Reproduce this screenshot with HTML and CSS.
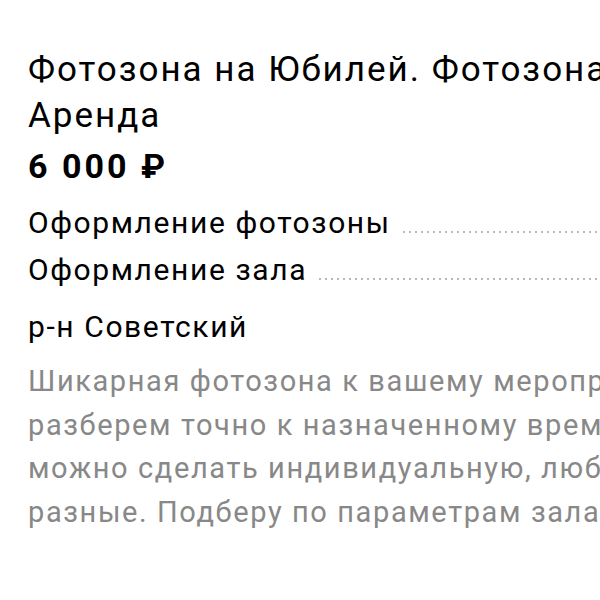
FILE: index.html
```html
<!DOCTYPE html>
<html lang="ru">
  <head>
    <meta charset="UTF-8" />
    <meta name="viewport" content="width=device-width, initial-scale=1.0" />
    <title>Фотозона на Юбилей</title>

    <link rel="stylesheet" href="styles.css">
  </head>
  <body>
    <div class="item">
      <div class="title">Фотозона на Юбилей. Фотозона<br />Аренда</div>
      <div class="price">6 000 ₽</div>

      <div class="params">
        <div class="param">
          <span class="param-name">Оформление фотозоны</span>
          <span class="dots"></span>
        </div>
        <div class="param">
          <span class="param-name">Оформление зала</span>
          <span class="dots"></span>
        </div>
      </div>

      <div class="geo">р-н Советский</div>

      <div class="desc">
        Шикарная фотозона к вашему мероприятию. Привезем, установим и<br />
        разберем точно к назначенному времени. Надпись и цвета шаров<br />
        можно сделать индивидуальную, любую. Размеры фотозон бывают<br />
        разные. Подберу по параметрам зала и вашим пожеланиям.
      </div>
    </div>
  </body>
</html>
```

FILE: styles.css
```css
html,
body {
  height: 100%;
  padding: 0;
  margin: 0;
  background: #fff;
  overflow: hidden;
}

.item {
  width: 900px;
  padding: 47px 0 0 28px;
  font-family: Roboto, sans-serif;
  color: #000;
  white-space: nowrap;
}

.title {
  font-size: 35px;
  line-height: 46px;
  letter-spacing: 2px;
}

.price {
  font-size: 34px;
  font-weight: 700;
  line-height: 50px;
  letter-spacing: 3px;
  margin-top: 2px;
}

.params {
  margin-top: 8px;
}

.param {
  display: flex;
  align-items: baseline;
  width: 600px;
  font-size: 30px;
  line-height: 47px;
  letter-spacing: 1.6px;
}

.dots {
  flex: 1;
  height: 2px;
  margin-left: 10px;
  background-image: radial-gradient(circle, #b8b8b8 1px, transparent 1.2px);
  background-size: 6px 2px;
}

.geo {
  margin-top: 10px;
  font-size: 30px;
  line-height: 47px;
  letter-spacing: 1.6px;
}

.desc {
  margin-top: 10px;
  font-size: 29px;
  line-height: 43.5px;
  letter-spacing: 1.6px;
  color: #888;
}
```
